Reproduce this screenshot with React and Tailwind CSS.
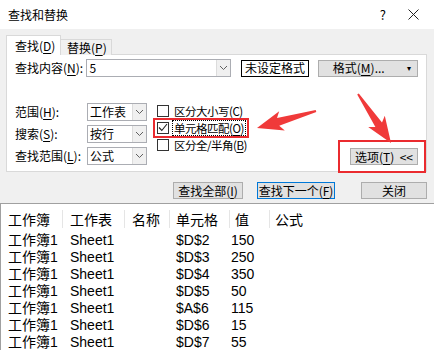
import React from 'react';

const ui = "font-['Noto_Sans_CJK_SC','Microsoft_YaHei',sans-serif]";

function U({ children }) {
  return <span className="underline underline-offset-2 decoration-1">{children}</span>;
}

function Chevron() {
  return (
    <svg width="9" height="6" viewBox="0 0 9 6" fill="none">
      <polyline points="1,1 4.5,4.5 8,1" stroke="#606060" strokeWidth="1" />
    </svg>
  );
}

function Combo({ value, className }) {
  return (
    <div className={`flex h-[18px] border border-[#abadb3] bg-white ${className}`}>
      <div className="flex-1 pl-[2px] leading-[16px] text-[12px] text-black">{value}</div>
      <div className="flex w-[14px] items-center justify-center border-l border-[#dcdcdc] bg-[#f0f0f0]">
        <Chevron />
      </div>
    </div>
  );
}

function Check({ checked, children, focus }) {
  return (
    <div className="flex h-[17px] items-center">
      <div className="flex h-[12px] w-[12px] items-center justify-center border border-[#333] bg-white">
        {checked && (
          <svg width="10" height="9" viewBox="0 0 10 9" fill="none">
            <polyline points="1,4.5 3.8,7.5 9,1" stroke="#222" strokeWidth="1.1" />
          </svg>
        )}
      </div>
      <span
        className={`ml-[3px] text-[11.5px] leading-[14px] tracking-[-0.5px] ${focus ? 'border border-dotted border-black px-px' : 'px-[2px]'}`}
      >
        {children}
      </span>
    </div>
  );
}

function Btn({ children, className = '' }) {
  return (
    <div
      className={`flex h-[17px] items-center justify-center border bg-[#e1e1e1] text-[12px] leading-[14px] ${className}`}
    >
      {children}
    </div>
  );
}

// red annotation arrow, tapered shaft
function arrowPoints(x1, y1, x2, y2) {
  const dx = x2 - x1;
  const dy = y2 - y1;
  const len = Math.hypot(dx, dy);
  const ux = dx / len;
  const uy = dy / len;
  const px = -uy;
  const py = ux;
  const head = 22;
  const hw = 10;
  const sw0 = 1;
  const sw1 = 4;
  const bx = x2 - ux * head;
  const by = y2 - uy * head;
  const bb = 4; // barbs pulled back a bit
  const pts = [
    [x1 + px * sw0, y1 + py * sw0],
    [bx + px * sw1, by + py * sw1],
    [bx - ux * bb + px * hw, by - uy * bb + py * hw],
    [x2, y2],
    [bx - ux * bb - px * hw, by - uy * bb - py * hw],
    [bx - px * sw1, by - py * sw1],
    [x1 - px * sw0, y1 - py * sw0],
  ];
  return pts.map((p) => p.map((v) => v.toFixed(1)).join(',')).join(' ');
}

const rows = [
  ['$D$2', '150'],
  ['$D$3', '250'],
  ['$D$4', '350'],
  ['$D$5', '50'],
  ['$A$6', '115'],
  ['$D$6', '15'],
  ['$D$7', '55'],
];

export default function App() {
  return (
    <div className={`relative flex h-[350px] w-[434px] flex-col overflow-hidden bg-[#f0f0f0] text-black ${ui}`}>
      {/* title bar */}
      <div className="flex h-[29px] shrink-0 items-center bg-white pl-[8px] text-[12px]">
        <span>查找和替换</span>
        <span className="ml-auto mr-[22px] text-[13px]">?</span>
        <svg className="mr-[15px]" width="11" height="11" viewBox="0 0 11 11">
          <path d="M0.5 0.5 L10.5 10.5 M10.5 0.5 L0.5 10.5" stroke="#222" strokeWidth="1" />
        </svg>
      </div>

      <div className="shrink-0 px-[6px] pt-[6px]">
        {/* tabs */}
        <div className="flex h-[20px] items-end text-[12px]">
          <div className="relative z-10 h-[20px] w-[55px] border border-b-0 border-[#d9d9d9] bg-white pl-[8px] leading-[19px]">
            查找(<U>D</U>)
          </div>
          <div className="h-[16px] w-[51px] border border-b-0 border-l-0 border-[#d9d9d9] bg-[#f0f0f0] pl-[6px] leading-[15px]">
            替换(<U>P</U>)
          </div>
        </div>

        {/* panel */}
        <div className="-mt-px h-[118px] w-[421px] border border-[#d9d9d9] bg-white px-[8px] pt-[4px] text-[12px]">
          <div className="flex h-[18px] items-center">
            <span className="w-[72px] leading-[14px]">查找内容(<U>N</U>):</span>
            <Combo value="5" className="w-[146px]" />
            <div className="ml-[10px] flex h-[17px] w-[68px] items-center justify-center border border-black leading-[14px]">
              未设定格式
            </div>
            <Btn className="ml-[9px] w-[101px] border-[#adadad]">
              <span className="ml-[14px]">格式(<U>M</U>)...</span>
              <span className="ml-auto mr-[6px] text-[8px]">▾</span>
            </Btn>
          </div>

          <div className="mt-[26px] flex items-end">
            <div className="flex w-[132px] flex-col gap-[4px]">
              <div className="flex h-[18px] items-center">
                <span className="w-[72px] leading-[14px]">范围(<U>H</U>):</span>
                <Combo value="工作表" className="w-[60px]" />
              </div>
              <div className="flex h-[18px] items-center">
                <span className="w-[72px] leading-[14px]">搜索(<U>S</U>):</span>
                <Combo value="按行" className="w-[60px]" />
              </div>
              <div className="flex h-[18px] items-center">
                <span className="w-[72px] leading-[14px]">查找范围(<U>L</U>):</span>
                <Combo value="公式" className="w-[60px]" />
              </div>
            </div>

            <div className="-mt-px ml-[10px] flex flex-col self-start">
              <Check>
                区分大小写(<U>C</U>)
              </Check>
              <Check checked focus>
                单元格匹配(<U>O</U>)
              </Check>
              <Check>
                区分全/半角(<U>B</U>)
              </Check>
            </div>

            <Btn className="ml-auto w-[68px] border-[#adadad]">
              选项(<U>T</U>)&nbsp;&nbsp;&lt;&lt;
            </Btn>
          </div>
        </div>

        {/* bottom buttons */}
        <div className="mt-[10px] flex justify-end pr-[1px]">
          <Btn className="w-[70px] border-[#adadad]">查找全部(<U>I</U>)</Btn>
          <Btn className="ml-[14px] w-[78px] border-[#0078d7]">查找下一个(<U>F</U>)</Btn>
          <Btn className="ml-[26px] w-[66px] border-[#adadad]">关闭</Btn>
        </div>
      </div>

      {/* results list */}
      <div className="mt-[4px] flex-1 border-l border-t border-[#a0a0a0] bg-white">
        <div className="grid h-[28px] grid-cols-[62px_62px_45px_60px_40px_1fr] items-center pt-[1px] text-[14px] leading-[18px]">
          <div className="border-r border-[#e5e5e5] pl-[7px]">工作簿</div>
          <div className="border-r border-[#e5e5e5] pl-[7px]">工作表</div>
          <div className="border-r border-[#e5e5e5] pl-[7px]">名称</div>
          <div className="border-r border-[#e5e5e5] pl-[6px]">单元格</div>
          <div className="border-r border-[#e5e5e5] pl-[5px]">值</div>
          <div className="pl-[5px]">公式</div>
        </div>
        {rows.map(([cell, val]) => (
          <div
            key={cell}
            className="grid h-[17px] grid-cols-[62px_62px_45px_60px_40px_1fr] items-center text-[14px] leading-[17px] font-['Liberation_Sans','Noto_Sans_CJK_SC',sans-serif]"
          >
            <div className="pl-[7px]">工作簿1</div>
            <div className="pl-[7px]">Sheet1</div>
            <div />
            <div className="pl-[6px]">{cell}</div>
            <div className="pl-[1px]">{val}</div>
            <div />
          </div>
        ))}
      </div>

      {/* red annotations */}
      <div className="pointer-events-none absolute left-[153px] top-[118px] h-[20px] w-[96px] border-2 border-[#ea2b2f]" />
      <div className="pointer-events-none absolute left-[338px] top-[140px] h-[33px] w-[88px] border-2 border-[#ea2b2f]" />
      <svg className="pointer-events-none absolute left-0 top-0" width="434" height="350">
        <polygon points={arrowPoints(316, 111, 257, 128)} fill="#f03a3a" />
        <polygon points={arrowPoints(358, 94, 391, 143)} fill="#f03a3a" />
      </svg>
    </div>
  );
}
